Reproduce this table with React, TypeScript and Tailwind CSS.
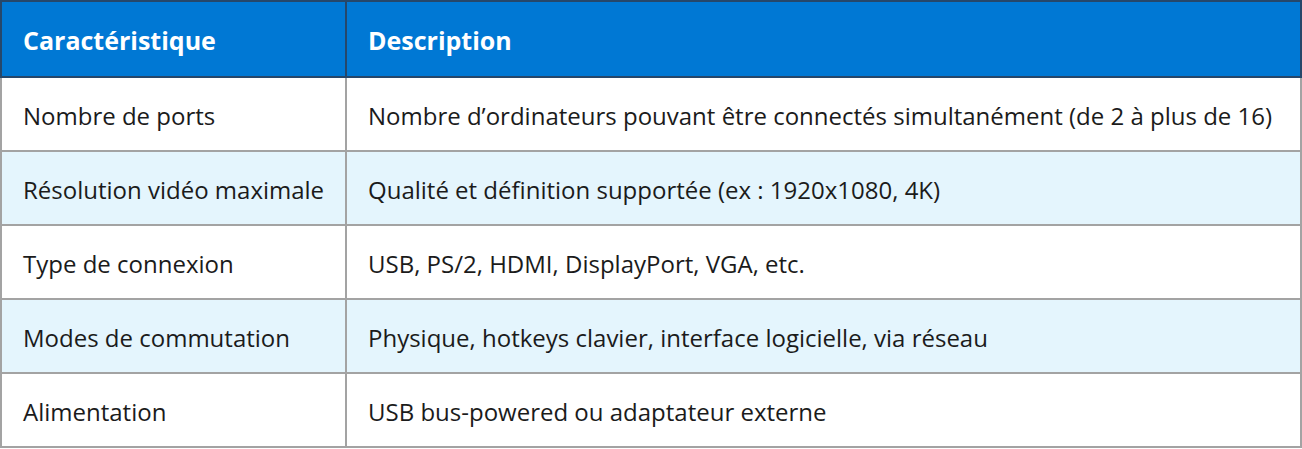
import React from 'react';

const rows = [
  ['Nombre de ports', 'Nombre d’ordinateurs pouvant être connectés simultanément (de 2 à plus de 16)'],
  ['Résolution vidéo maximale', 'Qualité et définition supportée (ex : 1920x1080, 4K)'],
  ['Type de connexion', 'USB, PS/2, HDMI, DisplayPort, VGA, etc.'],
  ['Modes de commutation', 'Physique, hotkeys clavier, interface logicielle, via réseau'],
  ['Alimentation', 'USB bus-powered ou adaptateur externe'],
];

export default function App() {
  return (
    <div className="w-[1302px] h-[449px] bg-white font-['Open_Sans',sans-serif] text-[#1b1b1b]">
      <table className="w-full border-collapse table-fixed">
        <colgroup>
          <col className="w-[345px]" />
          <col />
        </colgroup>
        <thead>
          <tr className="bg-[#0078d4] text-white h-[76px]">
            <th className="border-2 border-[#26476a] text-left font-bold text-[25px] pl-[21px] pt-[4px]">Caractéristique</th>
            <th className="border-2 border-[#26476a] text-left font-bold text-[25px] pl-[21px] pt-[4px]">Description</th>
          </tr>
        </thead>
        <tbody>
          {rows.map(([k, v], i) => (
            <tr key={k} className={i % 2 === 1 ? 'bg-[#e4f5fd] h-[74px]' : 'bg-white h-[74px]'}>
              <td className="border-2 border-[#a3a3a3] pl-[21px] text-[24px] pt-[3px]">{k}</td>
              <td className="border-2 border-[#a3a3a3] pl-[21px] text-[24px] pt-[3px]">{v}</td>
            </tr>
          ))}
        </tbody>
      </table>
    </div>
  );
}
